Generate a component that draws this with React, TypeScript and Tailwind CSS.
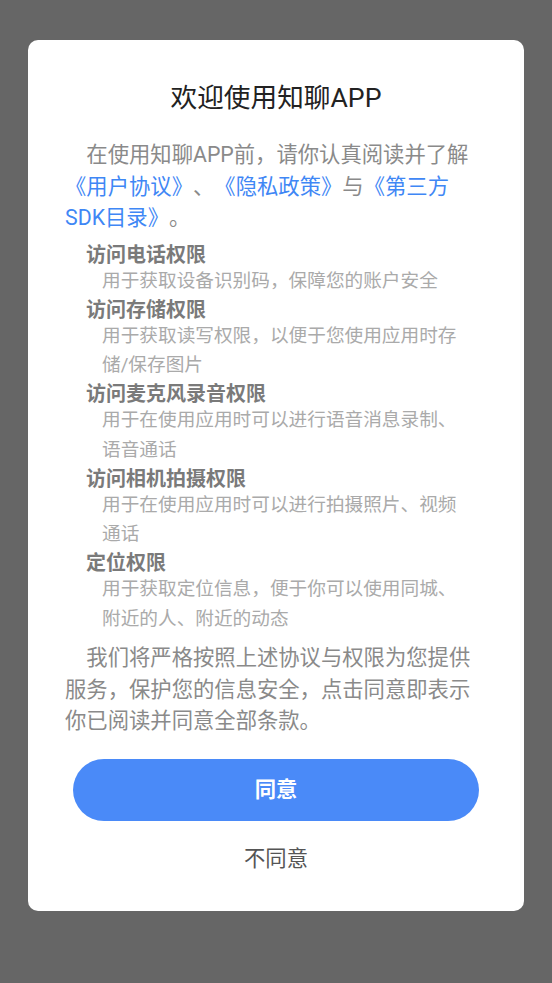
const permissions = [
  { title: "访问电话权限", desc: "用于获取设备识别码，保障您的账户安全" },
  { title: "访问存储权限", desc: "用于获取读写权限，以便于您使用应用时存储/保存图片" },
  { title: "访问麦克风录音权限", desc: "用于在使用应用时可以进行语音消息录制、语音通话" },
  { title: "访问相机拍摄权限", desc: "用于在使用应用时可以进行拍摄照片、视频通话" },
  { title: "定位权限", desc: "用于获取定位信息，便于你可以使用同城、附近的人、附近的动态" },
];

export default function App() {
  return (
    <div
      className="min-h-screen bg-[#666666] px-[28px] pt-[40px] [text-spacing-trim:space-all]"
      style={{ fontFamily: 'Roboto, "Noto Sans CJK SC", sans-serif' }}
    >
      <div className="flex flex-col rounded-[10px] bg-white pb-[37px] pt-[40px]">
        <h1 className="text-center text-[26.67px] leading-[36px] text-[#222222]">欢迎使用知聊APP</h1>

        <div className="mt-[23px] px-[37px]">
          <p className="w-[410px] indent-[1em] text-[21.33px] leading-[31.5px] text-[#8a8a8a]">
            在使用知聊APP前，请你认真阅读并了解
            <span className="text-[#3f87f5]">《用户协议》</span>、
            <span className="text-[#3f87f5]">《隐私政策》</span>与
            <span className="text-[#3f87f5]">《第三方SDK目录》</span>。
          </p>

          <div className="ml-[21px] mt-[9px] flex flex-col gap-[1.5px]">
            {permissions.map((p) => (
              <div key={p.title}>
                <p className="text-[20px] font-bold leading-[24px] text-[#7a7a7a]">{p.title}</p>
                <p className="w-[380px] pl-[16px] text-[18.67px] leading-[29.5px] text-[#aaaaaa]">{p.desc}</p>
              </div>
            ))}
          </div>

          <p className="mt-[8px] w-[410px] indent-[1em] text-[21.33px] leading-[31.67px] text-[#8a8a8a]">
            我们将严格按照上述协议与权限为您提供服务，保护您的信息安全，点击同意即表示你已阅读并同意全部条款。
          </p>
        </div>

        <button
          type="button"
          className="mx-[45px] mt-[21.5px] h-[62px] rounded-full bg-[#4a8af8] text-[21.33px] font-semibold text-white"
        >
          同意
        </button>
        <button type="button" className="mt-[23px] text-center text-[21.33px] leading-[30px] text-[#555555]">
          不同意
        </button>
      </div>
    </div>
  );
}
